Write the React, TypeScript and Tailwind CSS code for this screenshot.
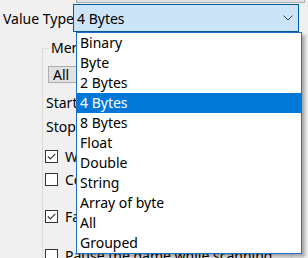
import React from "react";

const valueTypes = [
  "Binary",
  "Byte",
  "2 Bytes",
  "4 Bytes",
  "8 Bytes",
  "Float",
  "Double",
  "String",
  "Array of byte",
  "All",
  "Grouped",
];

const Check = ({ checked }: { checked: boolean }) => (
  <span className="w-[13px] h-[13px] shrink-0 border border-[#333333] bg-white flex items-center justify-center">
    {checked && (
      <svg width="9" height="7" viewBox="0 0 9 7">
        <path d="M0.8 3.4 L3.3 5.9 L8.3 0.9" fill="none" stroke="#333333" strokeWidth="1.2" />
      </svg>
    )}
  </span>
);

const CheckRow = ({ label, checked, mt }: { label: string; checked: boolean; mt: string }) => (
  <div className={`flex items-center h-[20px] ml-[2px] gap-[7px] whitespace-nowrap ${mt}`}>
    <Check checked={checked} />
    <span>{label}</span>
  </div>
);

export default function App() {
  const selected = "4 Bytes";

  return (
    <div
      className="relative w-[308px] h-[258px] overflow-hidden bg-[#f0f0f0] text-[14px] text-black"
      style={{ fontFamily: '"Noto Sans", "Segoe UI", sans-serif' }}
    >
      {/* previous control, cut off at the top */}
      <div className="ml-[76px] w-[229px] h-[3px] bg-[#e1e1e1] border-x border-b border-[#adadad]" />

      {/* Value Type row */}
      <div className="flex items-center mt-[1px] h-[28px]">
        <span className="w-[73px] pl-[3px] whitespace-nowrap">Value Type</span>
        <div className="w-[226px] h-[28px] flex items-center justify-between pl-[3px] pr-[5px] bg-[#cce4f7] border border-[#005a9e]">
          <span>{selected}</span>
          <svg width="10" height="6" viewBox="0 0 10 6">
            <path d="M0.5 0.5 L5 5 L9.5 0.5" fill="none" stroke="#404040" strokeWidth="1" />
          </svg>
        </div>
      </div>

      {/* Memory scan options group */}
      <fieldset className="ml-[42px] mt-[6px] w-[250px] h-[260px] border border-[#dcdcdc] p-0 m-0">
        <legend className="ml-[6px] px-[2px] leading-[20px] whitespace-nowrap">Memory Scan Options</legend>
        <div className="flex flex-col">
          <div className="ml-[5px] mt-[8px] w-[80px] h-[17px] bg-[#e1e1e1] border border-[#adadad] flex items-center pl-[4px] leading-none">
            All
          </div>
          <div className="ml-[3px] mt-[10px] h-[20px] leading-[20px] whitespace-nowrap">Start</div>
          <div className="ml-[3px] mt-[4px] h-[20px] leading-[20px] whitespace-nowrap">Stop</div>
          <CheckRow label="Writable" checked mt="mt-[9px]" />
          <CheckRow label="CopyOnWrite" checked={false} mt="mt-[3px]" />
          <CheckRow label="Fast Scan" checked mt="mt-[17px]" />
          <CheckRow label="Pause the game while scanning" checked={false} mt="mt-[19px]" />
        </div>
      </fieldset>

      {/* open dropdown list */}
      <ul className="absolute left-[76px] top-[32px] w-[226px] bg-white border border-[#1f6fc5] shadow-[3px_3px_3px_rgba(0,0,0,0.3)]">
        {valueTypes.map((t) => (
          <li
            key={t}
            className={`h-[20px] leading-[20px] pl-[3px] whitespace-nowrap ${
              t === selected ? "bg-[#0078d7] text-white" : "text-black"
            }`}
          >
            {t}
          </li>
        ))}
      </ul>
    </div>
  );
}
